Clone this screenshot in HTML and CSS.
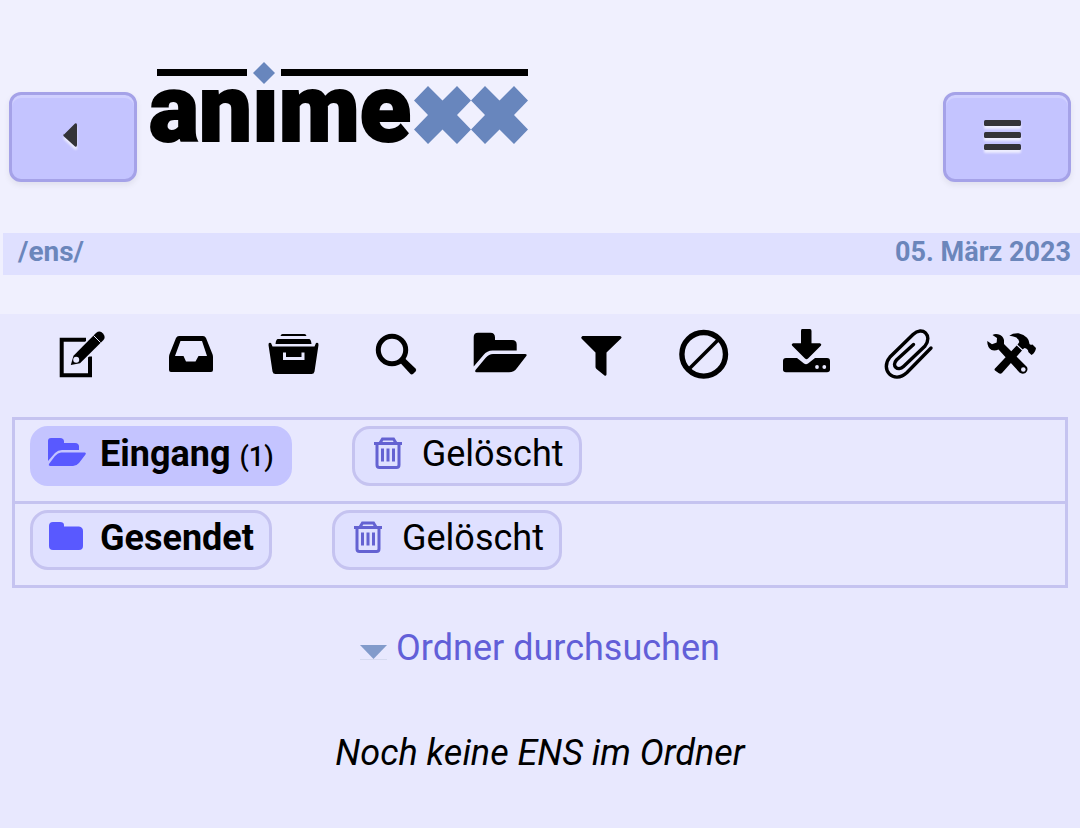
FILE: index.html
```html
<!DOCTYPE html>
<html lang="de">
<head>
  <meta charset="utf-8">
  <meta name="viewport" content="width=device-width, initial-scale=1">
  <title>ENS - Animexx</title>
  <link rel="stylesheet" href="styles.css">
</head>
<body>
  <header class="header">
    <button class="nav-button" type="button" aria-label="Zurück">
      <svg width="60" height="60" viewBox="0 0 60 60"><path d="M23.500 30L35 18.500Q37 17.500 37 20V40Q37 42.500 35 41.500L24 31.500Q22.500 30 24 28.500Z"/></svg>
    </button>
    <a class="logo" href="#" aria-label="Animexx">
      <svg width="378" height="120" viewBox="0 0 378 120">
        <path d="M7 7H97V14H7ZM131 7H378V14H131Z"/>
        <text class="logo-text" x="-1" y="79">anıme</text>
        <g class="logo-blue">
          <path d="M114 0L125 11L114 22L103 11Z"/>
          <path id="cross" d="M278 24L292.500 38.500L307 24L321 38.500L307 53L321 67.500L307 82L292.500 67.500L278 82L264 67.500L278 53L264 38.500Z"/>
          <use href="#cross" x="57"/>
        </g>
      </svg>
    </a>
    <button class="nav-button menu" type="button" aria-label="Menü">
      <svg width="60" height="60" viewBox="0 0 60 60">
        <rect x="10" y="15" width="37" height="6" rx="1.500"/>
        <rect x="10" y="27" width="37" height="6" rx="1.500"/>
        <rect x="10" y="39" width="37" height="6" rx="1.500"/>
      </svg>
    </button>
  </header>

  <div class="pathbar">
    <a class="path" href="#">/ens/</a>
    <span>05. März 2023</span>
  </div>

  <main class="main">
    <nav class="toolbar">
      <a href="#" aria-label="ENS schreiben">
        <svg viewBox="0 0 60 60">
          <path class="line" d="M28 15.700H3.700V51.200H32V32.500" stroke-width="4"/>
          <path class="halo" d="M12.800 41L15.500 31.700L38 9Q42 6 45 9.500T45.500 16L22 39.300Z"/>
          <circle class="hole" cx="18.200" cy="35.700" r="3"/>
          <path class="cut" d="M35.500 11.500L42.500 18.500" stroke-width="1"/>
        </svg>
      </a>
      <a href="#" aria-label="Posteingang">
        <svg viewBox="0 0 60 60"><path fill-rule="evenodd" d="M15 14Q16 12 18 12H42Q44 12 45 14L51 29Q52 31 52 33V46Q52 48 50 48H10Q8 48 8 46V33Q8 31 9 29ZM19.500 17L14 32H22.500L25 37.500H34.500L37.500 32H46L41 17Z"/></svg>
      </a>
      <a href="#" aria-label="Archiv">
        <svg viewBox="0 0 60 60">
          <path d="M19.500 10H41.500Q43 10 43.500 12H17.500Q18 10 19.500 10ZM15 15H46Q48 15 48.500 20H12.500Q13 15 15 15ZM8 19L9.500 22.500H51.500L53 19Q55.700 18 55.500 21L51.500 47.500Q51 50 48.500 50H12.500Q10 50 9.500 47.500L5.500 21Q5.300 18 8 19Z"/>
          <path class="cut" d="M21.500 28.500V34.500H40V28.500" stroke-width="3"/>
        </svg>
      </a>
      <a href="#" aria-label="Suchen">
        <svg viewBox="0 0 60 60">
          <circle class="line" cx="26" cy="26" r="13.700" stroke-width="5"/>
          <path d="M33 37.500L37.500 33L49.500 44.500Q51 46 49.500 47.500L47 50Q45.500 51 44 49.500Z"/>
        </svg>
      </a>
      <a href="#" aria-label="Ordner">
        <svg viewBox="0 0 60 60"><path d="M4.700 42.500V13Q4.700 8.700 9 8.700H21.500Q26 8.700 26 13.500V16H43Q47.700 16 47.700 20.500V26.500H23.500Q18 26.500 14.500 31ZM6.500 46L16.500 34Q20 30 24 30H56Q58.500 30 57.300 32L48 44Q45 48.300 40 48.300H7.500Q5.500 48.300 6.500 46Z"/></svg>
      </a>
      <a href="#" aria-label="Filter">
        <svg viewBox="0 0 60 60"><path d="M11.500 12H49Q51.500 13 50 14.500L35.500 28.500V50.500Q35 52.500 33.500 51.500L25.500 45Q24.500 44 24.500 43V28.500L10.500 14.500Q9.500 13 11.500 12Z"/></svg>
      </a>
      <a href="#" aria-label="Blockieren">
        <svg viewBox="0 0 60 60">
          <circle class="line" cx="29.700" cy="30.300" r="21.800" stroke-width="5.400"/>
          <path class="line" d="M14.500 45.500L45 15" stroke-width="3.600"/>
        </svg>
      </a>
      <a href="#" aria-label="Herunterladen">
        <svg viewBox="0 0 60 60">
          <path d="M10 34H21L28 39.500Q30 41 32 39.500L39 34H51Q54 34 54 37V45.500Q54 48.300 51 48.300H10Q7 48.300 7 45.500V37Q7 34 10 34Z"/>
          <path d="M26 5H34Q35.500 5 35.500 7V19.300H44Q46 20 45 21.500L32 34.500Q30.500 36 29 34.500L16 21.500Q15 20 17 19.300H25V7Q25 5 26 5Z"/>
          <circle class="hole" cx="41" cy="43" r="1.900"/><circle class="hole" cx="48.300" cy="43" r="1.900"/>
        </svg>
      </a>
      <a href="#" aria-label="Anhänge">
        <svg viewBox="0 0 60 60"><path class="line round" stroke-width="3.400" d="M52 24L28 48.500C14.500 61 .5 45.500 11 33L34 10.500C43.500 1.500 54 11.500 46 22L24.500 42.500C19 48 12 42 17.500 36L34.500 20.500"/></svg>
      </a>
      <a href="#" aria-label="Einstellungen">
        <svg viewBox="0 0 60 60">
          <path d="M34.700 21.500L40 26.500L20 49Q18.500 50.500 16.500 49L13 46.500Q12 45.500 13 44.500Z"/>
          <path d="M5.300 17L10 20.300L14.700 18.500L15 14L10.500 11Q13 9.500 16 10.300Q21 11.500 22 16V20L45 43Q46.500 46.500 43.500 49Q40 50.500 37.500 48.500L16.500 25.500Q13 27 9.500 26Q5 23 5.300 17Z"/>
          <path d="M27.300 11.700Q31 9 36.500 9.300Q42 10.500 45 13.700Q47.500 16.500 47.300 19.500Q48 21.500 50.500 20.500L54 24Q53.500 28.500 49.500 31L46.300 28Q46.500 25 42.500 24L40.500 25.500L35.500 20.800L37.300 18Q37 14.500 33 13Q30.500 12 27.300 11.700Z"/>
          <path class="cut" d="M34.700 20.700L41 26.500" stroke-width="1"/>
          <circle class="hole" cx="41.300" cy="45.500" r="2.300"/>
        </svg>
      </a>
    </nav>

    <div class="folders">
      <div class="folder-row">
        <a class="folder active" href="#">
          <svg viewBox="0 0 38 38"><path d="M0 26V6Q0 3 3 3H12Q16 3 16 6.500V8H27Q31 8 31 11.500V15H14Q10 15 7 18ZM1 29L7 21Q10 17.500 13 17.500H37Q38.500 18 37.500 19.500L31 28Q28.500 31 25 31H2Q0 30.500 1 29Z"/></svg>
          <b>Eingang <small>(1)</small></b>
        </a>
        <a class="folder" href="#">
          <svg class="trash" viewBox="0 0 38 38"><path d="M4 8.500H32M10 8L12.500 4H23.500L26 8M7 9V30Q7 32.500 9.500 32.500H26.500Q29 32.500 29 30V9M12.500 13.500V26.500M18 13.500V26.500M23.500 13.500V26.500"/></svg>
          <span>Gelöscht</span>
        </a>
      </div>
      <div class="folder-row">
        <a class="folder" href="#">
          <svg viewBox="0 0 38 38"><path d="M5 3H12Q16 3 16 6V7.500H31Q35 8 35 12V27Q35 31 31 31H5Q1 31 1 27V7Q1 3 5 3Z"/></svg>
          <b>Gesendet</b>
        </a>
        <a class="folder" href="#">
          <svg class="trash" viewBox="0 0 38 38"><path d="M4 8.500H32M10 8L12.500 4H23.500L26 8M7 9V30Q7 32.500 9.500 32.500H26.500Q29 32.500 29 30V9M12.500 13.500V26.500M18 13.500V26.500M23.500 13.500V26.500"/></svg>
          <span>Gelöscht</span>
        </a>
      </div>
    </div>

    <a class="search-link" href="#">
      <svg width="27" height="18" viewBox="0 0 27 18"><path d="M0 2H27L13.500 16Z"/><path class="underline" d="M0 16H27V17H0Z"/></svg>
      <span>Ordner durchsuchen</span>
    </a>
    <p class="empty">Noch keine ENS im Ordner</p>
  </main>
</body>
</html>
```
FILE: styles.css
```css
* {
  box-sizing: border-box;
}

body {
  margin: 0;
  min-height: 100vh;
  display: flex;
  flex-direction: column;
  background-color: #f0f0fe;
  color: #000;
  font-family: Roboto, "Liberation Sans", sans-serif;
  font-size: 36px;
  line-height: 42px;
}

a {
  color: inherit;
  text-decoration: none;
}

svg {
  display: block;
  overflow: visible;
}

/* Kopfbereich */
.header {
  display: flex;
  align-items: flex-end;
  gap: 13px;
  padding: 62px 9px 51px;
}

.nav-button {
  display: flex;
  align-items: center;
  justify-content: center;
  width: 128px;
  height: 90px;
  padding: 0 7px 4px 0;
  border: 3px solid #a5a2e8;
  border-radius: 12px;
  background-color: #c4c4ff;
  box-shadow: inset 0 3px 0 #d0d0ff, 0 3px 6px rgba(0, 0, 0, 0.07);
}

.nav-button svg {
  fill: #333338;
  filter: drop-shadow(0 3px 1px rgba(255, 255, 255, 0.7));
}

.menu {
  margin-left: auto;
}

.logo-text {
  font-size: 94px;
  font-weight: 900;
  stroke: #000;
  stroke-width: 2px;
}

.logo-blue {
  fill: #6886bd;
}

/* Pfad und Datum */
.pathbar {
  display: flex;
  justify-content: space-between;
  margin-left: 3px;
  padding: 0 9px 4px 15px;
  background-color: #dfe0ff;
  color: #6b86bb;
  font-size: 27px;
  font-weight: bold;
  line-height: 38px;
}

.path {
  font-size: 28px;
}

.main {
  flex: 1;
  margin-top: 39px;
  background-color: #e8e8fe;
}

/* Symbolleiste */
.toolbar {
  display: flex;
  justify-content: space-around;
  padding: 10px 17px 33px 37px;
}

.toolbar svg {
  width: 60px;
  height: 60px;
}

.line {
  fill: none;
  stroke: #000;
}

.round {
  stroke-linecap: round;
}

.cut {
  fill: none;
  stroke: #e8e8fe;
}

.hole {
  fill: #e8e8fe;
}

/* heller Rand um den Stift */
.halo {
  stroke: #e8e8fe;
  stroke-width: 3px;
  paint-order: stroke;
}

/* Ordner */
.folders {
  margin: 0 12px;
  border: 3px solid #c5c3f0;
}

.folder-row {
  display: flex;
  gap: 60px;
  padding: 6px 15px 15px;
}

.folder-row + .folder-row {
  border-top: 3px solid #c5c3f0;
}

.folder {
  display: flex;
  align-items: center;
  gap: 14px;
  height: 60px;
  padding: 0 15px 4px;
  border: 3px solid #c5c3f0;
  border-radius: 18px;
  background-color: #dfe0ff;
}

.active {
  border-color: #c4c4ff;
  background-color: #c4c4ff;
}

.folder svg {
  width: 38px;
  height: 38px;
  fill: #5959ff;
}

.folder .trash {
  fill: none;
  stroke: #6462d2;
  stroke-width: 3px;
}

.folder b {
  font-weight: 700;
}

.folder small {
  font-size: 27px;
  font-weight: 500;
  line-height: 1;
}

/* Suche und Hinweis */
.search-link {
  display: flex;
  align-items: center;
  justify-content: center;
  gap: 9px;
  margin-top: 39px;
  color: #625fd8;
}

.search-link svg {
  margin-top: 8px;
  fill: #829bcb;
}

.search-link .underline {
  fill: #d6daf0;
}

.empty {
  margin: 63px 0 0;
  font-style: italic;
  text-align: center;
}
```
